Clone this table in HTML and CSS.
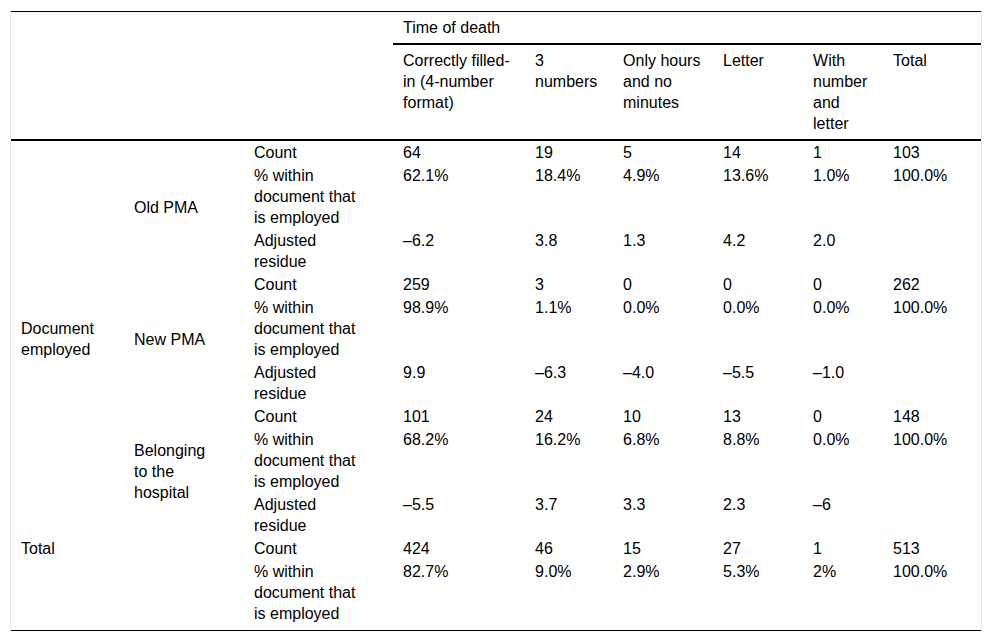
FILE: index.html
```html
<!DOCTYPE html>
<html lang="en">
<head>
<meta charset="utf-8">
<title>Time of death</title>
<link rel="stylesheet" href="styles.css">
</head>
<body>
<div class="wrap">
<table class="tbl">
<colgroup>
<col class="c1"><col class="c2"><col class="c3"><col class="c4"><col class="c5"><col class="c6"><col class="c7"><col class="c8"><col class="c9">
</colgroup>
<thead>
<tr>
<th colspan="3" rowspan="2" class="blank"></th>
<th colspan="6" class="group">Time of death</th>
</tr>
<tr class="sub">
<th>Correctly filled-<br>in (4-number<br>format)</th>
<th>3<br>numbers</th>
<th>Only hours<br>and no<br>minutes</th>
<th>Letter</th>
<th>With<br>number<br>and<br>letter</th>
<th>Total</th>
</tr>
</thead>
<tbody>
<tr>
<td rowspan="9" class="mid">Document<br>employed</td>
<td rowspan="3" class="mid">Old PMA</td>
<td>Count</td><td>64</td><td>19</td><td>5</td><td>14</td><td>1</td><td>103</td>
</tr>
<tr>
<td>% within<br>document that<br>is employed</td><td>62.1%</td><td>18.4%</td><td>4.9%</td><td>13.6%</td><td>1.0%</td><td>100.0%</td>
</tr>
<tr>
<td>Adjusted<br>residue</td><td>–6.2</td><td>3.8</td><td>1.3</td><td>4.2</td><td>2.0</td><td></td>
</tr>
<tr>
<td rowspan="3" class="mid">New PMA</td>
<td>Count</td><td>259</td><td>3</td><td>0</td><td>0</td><td>0</td><td>262</td>
</tr>
<tr>
<td>% within<br>document that<br>is employed</td><td>98.9%</td><td>1.1%</td><td>0.0%</td><td>0.0%</td><td>0.0%</td><td>100.0%</td>
</tr>
<tr>
<td>Adjusted<br>residue</td><td>9.9</td><td>–6.3</td><td>–4.0</td><td>–5.5</td><td>–1.0</td><td></td>
</tr>
<tr>
<td rowspan="3" class="mid">Belonging<br>to the<br>hospital</td>
<td>Count</td><td>101</td><td>24</td><td>10</td><td>13</td><td>0</td><td>148</td>
</tr>
<tr>
<td>% within<br>document that<br>is employed</td><td>68.2%</td><td>16.2%</td><td>6.8%</td><td>8.8%</td><td>0.0%</td><td>100.0%</td>
</tr>
<tr>
<td>Adjusted<br>residue</td><td>–5.5</td><td>3.7</td><td>3.3</td><td>2.3</td><td>–6</td><td></td>
</tr>
<tr>
<td colspan="2" rowspan="2" class="last">Total</td>
<td>Count</td><td>424</td><td>46</td><td>15</td><td>27</td><td>1</td><td>513</td>
</tr>
<tr class="lastrow">
<td>% within<br>document that<br>is employed</td><td>82.7%</td><td>9.0%</td><td>2.9%</td><td>5.3%</td><td>2%</td><td>100.0%</td>
</tr>
</tbody>
</table>
</div>
</body>
</html>
```
FILE: styles.css
```css
html, body {
  margin: 0;
  padding: 0;
  background: #ffffff;
}

body {
  font-family: "Liberation Sans", Arial, Helvetica, sans-serif;
  font-size: 16px;
  line-height: 21px;
  color: #000000;
}

.wrap {
  margin: 10px 0 0 10px;
  width: 970px;
  padding: 1px 0 0 0;
  border-left: 1px solid #e6e6e6;
  border-right: 1px solid #e6e6e6;
}

.tbl {
  width: 970px;
  table-layout: fixed;
  border-collapse: separate;
  border-spacing: 0;
}

.c1 { width: 113px; }
.c2 { width: 120px; }
.c3 { width: 149px; }
.c4 { width: 132px; }
.c5 { width: 88px; }
.c6 { width: 100px; }
.c7 { width: 90px; }
.c8 { width: 80px; }
.c9 { width: 98px; }

.tbl th,
.tbl td {
  text-align: left;
  vertical-align: top;
  font-weight: normal;
  white-space: nowrap;
  padding: 1px 10px;
}

.tbl th {
  padding: 5px 10px;
}

.tbl .blank,
.tbl .group {
  border-top: 1px solid #000000;
  border-bottom: 2px solid #000000;
}

.tbl .sub th {
  border-bottom: 2px solid #000000;
}

.tbl td.mid {
  vertical-align: middle;
}

.tbl .lastrow td {
  padding-bottom: 6px;
  border-bottom: 1px solid #000000;
}

.tbl td.last {
  padding-bottom: 6px;
  border-bottom: 1px solid #000000;
}
```
